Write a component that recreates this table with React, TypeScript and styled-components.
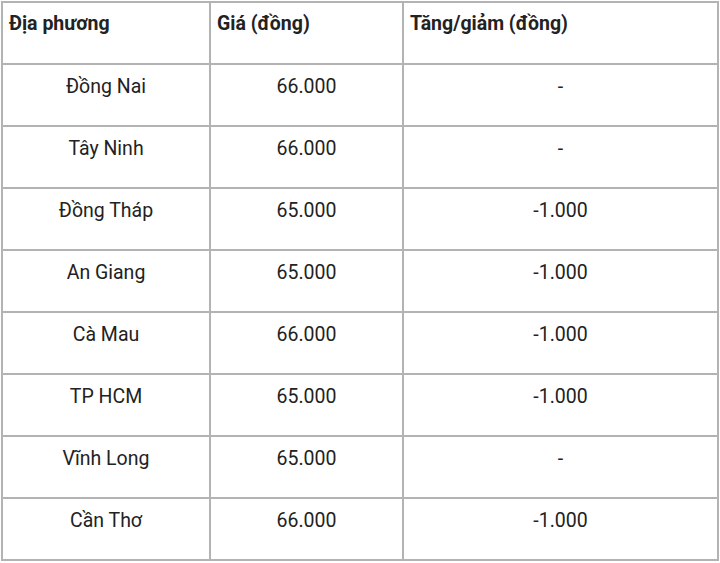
import React from 'react';
import styled, { createGlobalStyle } from 'styled-components';

const GlobalStyle = createGlobalStyle`
  body {
    margin: 0;
    background: #ffffff;
    font-family: Roboto, "Liberation Sans", Arial, sans-serif;
    color: #222222;
  }
`;

const rows = [
  { place: 'Đồng Nai', price: '66.000', change: '-' },
  { place: 'Tây Ninh', price: '66.000', change: '-' },
  { place: 'Đồng Tháp', price: '65.000', change: '-1.000' },
  { place: 'An Giang', price: '65.000', change: '-1.000' },
  { place: 'Cà Mau', price: '66.000', change: '-1.000' },
  { place: 'TP HCM', price: '65.000', change: '-1.000' },
  { place: 'Vĩnh Long', price: '65.000', change: '-' },
  { place: 'Cần Thơ', price: '66.000', change: '-1.000' },
];

const PriceTable = styled.table`
  border-collapse: collapse;
  table-layout: fixed;
  width: 716px;
  margin: 1px 0 0 1px;
  font-size: 19.5px;
`;

const HeadCell = styled.th<{ $w: number }>`
  box-sizing: border-box;
  width: ${p => p.$w}px;
  height: 62px;
  border: 2px solid #b3b3b3;
  padding: 9px 6px 0;
  text-align: left;
  vertical-align: top;
  font-weight: 700;
  line-height: 24px;
`;

const Cell = styled.td`
  box-sizing: border-box;
  height: 62px;
  border: 2px solid #b3b3b3;
  padding: 10px 8px 0;
  text-align: center;
  vertical-align: top;
  line-height: 24px;
`;

export default function App() {
  return (
    <>
      <GlobalStyle />
      <PriceTable>
        <thead>
          <tr>
            <HeadCell $w={208}>Địa phương</HeadCell>
            <HeadCell $w={193}>Giá (đồng)</HeadCell>
            <HeadCell $w={315}>Tăng/giảm (đồng)</HeadCell>
          </tr>
        </thead>
        <tbody>
          {rows.map(r => (
            <tr key={r.place}>
              <Cell>{r.place}</Cell>
              <Cell>{r.price}</Cell>
              <Cell>{r.change}</Cell>
            </tr>
          ))}
        </tbody>
      </PriceTable>
    </>
  );
}
